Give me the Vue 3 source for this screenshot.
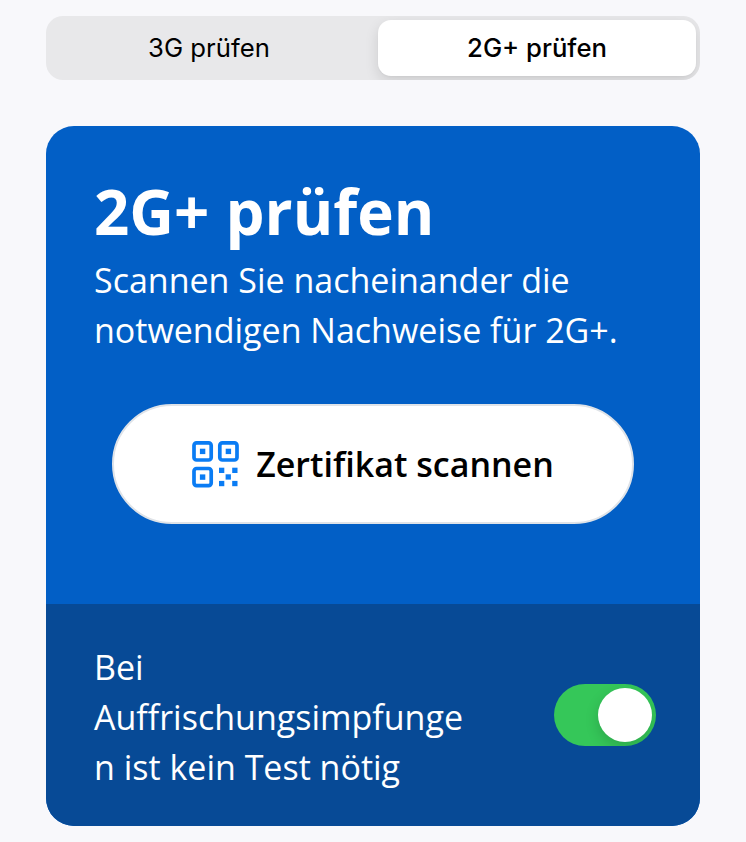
<template>
  <main class="page">
    <div class="tabs" role="tablist">
      <button
          v-for="tab in tabs"
          :key="tab.id"
          class="tab"
          :class="{ 'is-active': mode === tab.id }"
          role="tab"
          :aria-selected="mode === tab.id"
          @click="mode = tab.id"
      ><span class="tab-label">{{ tab.label }}</span></button>
    </div>

    <section class="card">
      <div class="card-main">
        <h1 class="title">{{ activeTab.label }}</h1>
        <p class="text intro">Scannen Sie nacheinander die notwendigen Nachweise für {{ activeTab.short }}.</p>
        <button class="scan-button">
          <svg class="qr" viewBox="0 0 48 48" aria-hidden="true">
            <g fill="none" stroke="currentColor" stroke-width="3.7">
              <rect x="2" y="2.8" width="17.2" height="17.2" rx="2.6" />
              <rect x="27.8" y="2.8" width="17.2" height="17.2" rx="2.6" />
              <rect x="2" y="28.5" width="17.2" height="17.2" rx="2.6" />
            </g>
            <g fill="currentColor">
              <rect x="7.9" y="8.7" width="5.4" height="5.4" />
              <rect x="33.7" y="8.7" width="5.4" height="5.4" />
              <rect x="7.9" y="34.4" width="5.4" height="5.4" />
              <rect x="27" y="27.7" width="5.3" height="5.3" />
              <rect x="40.2" y="27.7" width="5.3" height="5.3" />
              <rect x="33.6" y="34.3" width="5.3" height="5.3" />
              <rect x="27" y="40.9" width="5.3" height="5.3" />
              <rect x="40.2" y="40.9" width="5.3" height="5.3" />
            </g>
          </svg>
          <span class="scan-label">Zertifikat scannen</span>
        </button>
      </div>

      <div class="card-footer">
        <p class="text booster">Bei Auffrischungsimpfungen ist kein Test nötig</p>
        <button
            class="toggle"
            :class="{ 'is-checked': boosterExempt }"
            role="switch"
            :aria-checked="boosterExempt"
            aria-label="Bei Auffrischungsimpfungen ist kein Test nötig"
            @click="boosterExempt = !boosterExempt"
        >
          <span class="toggle-thumb"></span>
        </button>
      </div>
    </section>
  </main>
</template>

<script setup>
import { computed, ref } from 'vue'

const tabs = [
  { id: '3g', short: '3G', label: '3G prüfen' },
  { id: '2gplus', short: '2G+', label: '2G+ prüfen' }
]

const mode = ref('2gplus')
const boosterExempt = ref(true)

const activeTab = computed(() => tabs.find(tab => tab.id === mode.value))
</script>

<style>
body {
  margin: 0;
  background: #f8f8fb;
}
</style>

<style scoped>
.page {
  box-sizing: border-box;
  min-height: 842px;
  padding: 16px 46px;
  font-family: "Open Sans", sans-serif;
}

button {
  border: 0;
  margin: 0;
  padding: 0;
  font: inherit;
  color: inherit;
  background: none;
  cursor: pointer;
}

.tabs {
  display: grid;
  grid-template-columns: 318px 318px;
  justify-content: space-between;
  box-sizing: border-box;
  height: 64px;
  padding: 4px;
  border-radius: 17px;
  background: #e8e8ea;
  overflow: hidden;
}

.tab {
  border-radius: 13px;
  font-family: Inter, sans-serif;
  font-size: 25.7px;
  line-height: 56px;
  color: #000;
}

.tab.is-active {
  background: #fff;
  font-weight: 500;
  box-shadow: 0 5px 14px rgba(0, 0, 0, 0.12), 0 1px 2px rgba(0, 0, 0, 0.03);
}

.card {
  margin-top: 46px;
  border-radius: 28px;
  overflow: hidden;
  background: #025fc6;
  color: #fff;
}

.card-main {
  box-sizing: border-box;
  height: 478px;
  padding: 49px 48px 0;
}

.title {
  margin: 0 0 8px;
  font-size: 61.8px;
  font-weight: 700;
  line-height: 72px;
}

.text {
  margin: 0;
  font-size: 34px;
  line-height: 50px;
}

.scan-button {
  display: flex;
  align-items: center;
  justify-content: center;
  gap: 16px;
  box-sizing: border-box;
  width: 522px;
  height: 120px;
  margin: 49px auto 0;
  border: 2px solid #dfe3e8;
  border-radius: 60px;
  background: #fff;
  color: #000;
}

.qr {
  width: 48px;
  height: 48px;
  color: #0a7cf4;
}

.scan-label {
  font-size: 34px;
  font-weight: 600;
}

.card-footer {
  display: flex;
  align-items: center;
  justify-content: space-between;
  box-sizing: border-box;
  height: 222px;
  padding: 0 44px 0 48px;
  background: #074a96;
}

.booster {
  width: 376px;
  padding-top: 4px;
  overflow-wrap: anywhere;
}

.toggle {
  display: flex;
  box-sizing: border-box;
  width: 102px;
  height: 62px;
  padding: 4px;
  border-radius: 31px;
  background: #8e9aab;
  overflow: hidden;
}

.toggle.is-checked {
  justify-content: flex-end;
  background: #35c759;
}

.toggle-thumb {
  width: 54px;
  height: 54px;
  border-radius: 50%;
  background: #fff;
  box-shadow: 0 5px 14px rgba(0, 0, 0, 0.16);
}
</style>
